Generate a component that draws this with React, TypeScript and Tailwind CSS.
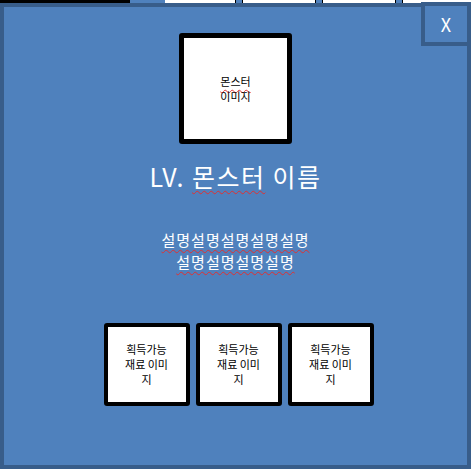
import React from "react";

const squiggle = "underline decoration-wavy decoration-[#e03030] decoration-1 underline-offset-[3px]";

function MaterialSlot() {
  return (
    <div className="w-[86px] h-[83px] rounded-[3px] border-[4px] border-black bg-white flex items-center justify-center">
      <div className="text-[11px] leading-[15px] text-black text-center w-[56px] break-all">
        획득가능
        <br />
        재료 이미
        <br />지
      </div>
    </div>
  );
}

export default function App() {
  return (
    <div
      className="relative w-[473px] h-[469px] overflow-hidden bg-white"
      style={{ fontFamily: '"Noto Sans CJK KR", "Noto Sans", sans-serif' }}
    >
      {/* background items peeking out behind the popup */}
      <div className="flex h-[4px]">
        <div className="w-[130px] bg-black" />
        <div className="w-[35px] bg-[#4f81bd]" />
        <div className="w-[70px] bg-white" />
        <div className="w-[8px] bg-[#4f81bd] border-x border-black" />
        <div className="w-[72px] bg-white" />
        <div className="w-[8px] bg-[#4f81bd] border-x border-black" />
        <div className="w-[72px] bg-white" />
        <div className="w-[8px] bg-[#4f81bd] border-x border-black" />
        <div className="flex-1 bg-white" />
      </div>

      <div className="absolute left-0 top-[3px] w-[471px] h-[466px] border-[4px] border-[#385d8a] bg-[#4f81bd] flex flex-col items-center">
        <div className="mt-[26px] w-[113px] h-[111px] rounded-[3px] border-[5px] border-black bg-white flex items-center justify-center">
          <div className="text-[11px] leading-[15px] text-black text-center">
            <span className={squiggle}>몬스터</span>
            <br />
            이미지
          </div>
        </div>

        <div className="mt-[16px] text-[25px] leading-[33px] tracking-[1.5px] text-white">
          LV. <span className={squiggle}>몬스터</span> 이름
        </div>

        <div className="mt-[36px] flex flex-col items-center text-[15px] leading-[22px] tracking-[1px] text-white">
          <span className={squiggle}>설명설명설명설명설명</span>
          <span className={squiggle}>설명설명설명설명</span>
        </div>

        <div className="mt-[50px] flex gap-[6px] ml-[6px]">
          <MaterialSlot />
          <MaterialSlot />
          <MaterialSlot />
        </div>
      </div>

      <div className="absolute left-[421px] top-[2px] w-[50px] h-[44px] border-[4px] border-[#385d8a] bg-[#4f81bd] flex items-center justify-center text-white text-[18px] leading-none">
        X
      </div>
    </div>
  );
}
